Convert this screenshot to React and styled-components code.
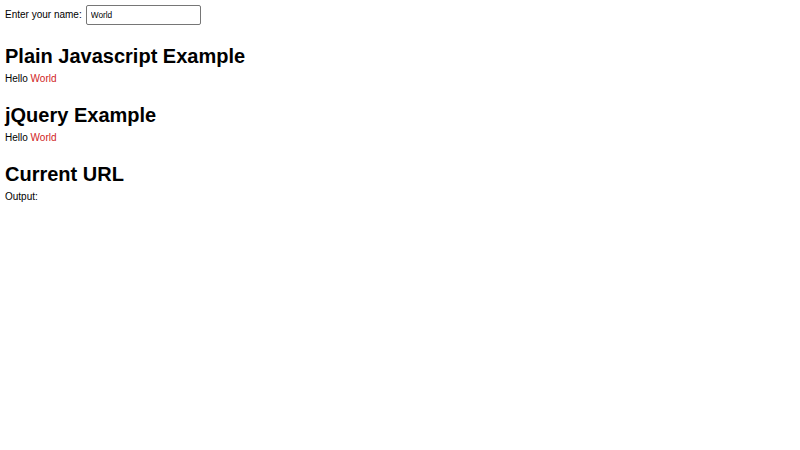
import React, {useState} from 'react';
import styled, {createGlobalStyle} from 'styled-components';

const GlobalStyle = createGlobalStyle`
    html, body {
        margin: 0;
        padding: 0;
        background: #fff;
    }
    body {
        font-family: "Liberation Sans", Arial, sans-serif;
        color: #000;
    }
`;

function App() {
    const [name, setName] = useState('World');

    return (
        <Page>
            <GlobalStyle/>
            <NameRow>
                <Label htmlFor="name">Enter your name:</Label>
                <NameInput id="name" type="text" value={name} onChange={e => setName(e.target.value)}/>
            </NameRow>

            <Section>
                <Heading>Plain Javascript Example</Heading>
                <Line>Hello <Name>{name}</Name></Line>
            </Section>

            <Section>
                <Heading>jQuery Example</Heading>
                <Line>Hello <Name>{name}</Name></Line>
            </Section>

            <Section>
                <Heading>Current URL</Heading>
                <Line>Output:</Line>
            </Section>
        </Page>
    );
}

const Page = styled.div`
    padding: 5px;
    min-height: 440px;
`;

const NameRow = styled.div`
    display: flex;
    align-items: flex-start;
    gap: 4px;
    height: 20px;
    padding-bottom: 1px;
`;

const Label = styled.label`
    padding-top: 4px;
    font-size: 10px;
    line-height: 12px;
`;

const NameInput = styled.input`
    box-sizing: border-box;
    width: 115px;
    height: 20px;
    margin: 0;
    padding: 0 4px;
    border: 1px solid #767676;
    border-radius: 2px;
    font-family: "Liberation Sans", Arial, sans-serif;
    font-size: 8.3px;
    color: #000;
    outline: none;
`;

const Section = styled.section`
    margin-top: 19px;
`;

const Heading = styled.h1`
    margin: 0 0 5px;
    font-size: 20px;
    line-height: 23px;
    font-weight: bold;
`;

const Line = styled.div`
    font-size: 10px;
    line-height: 12px;
`;

const Name = styled.span`
    color: #d01c1c;
`;

export default App;
